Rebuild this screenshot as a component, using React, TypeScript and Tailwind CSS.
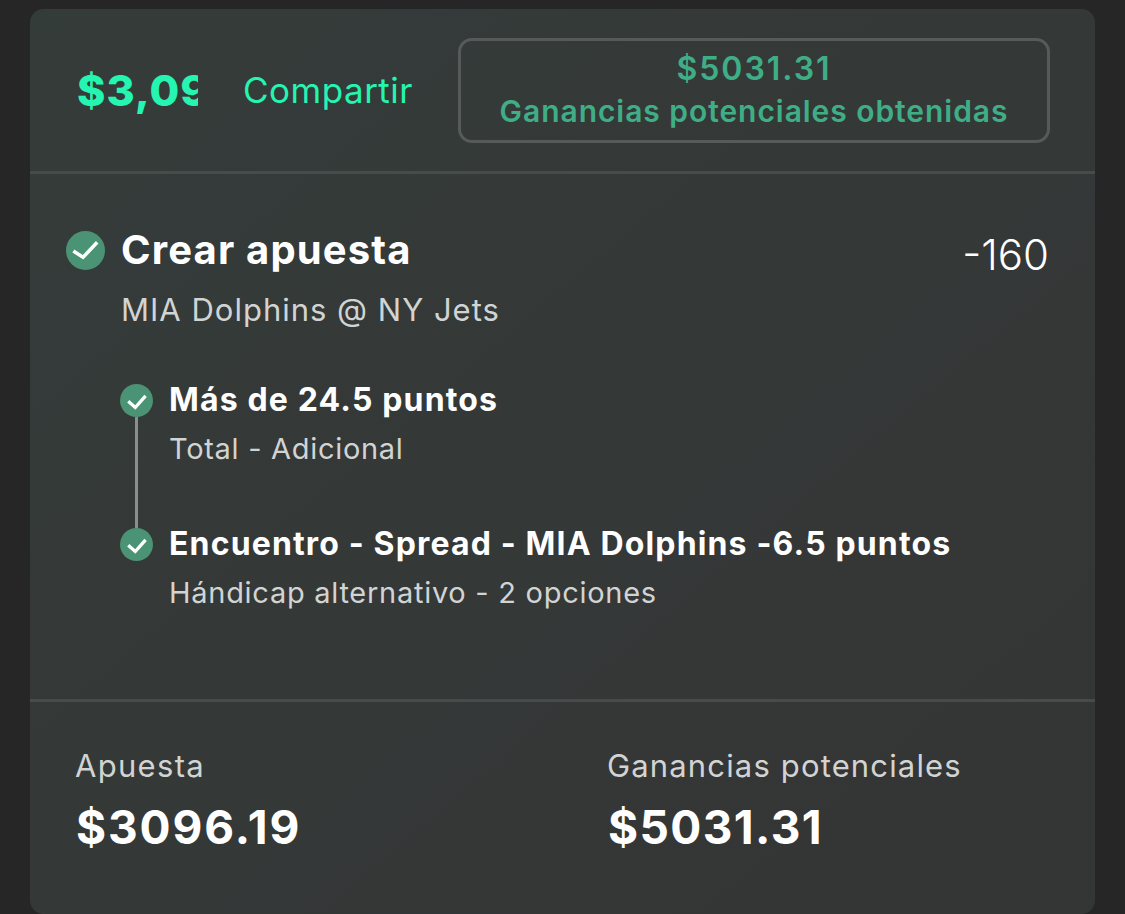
function Check({ size, d, w }: { size: number; d: string; w: number }) {
  return (
    <svg width={size} height={size} viewBox="0 0 40 40" className="shrink-0 block">
      <circle cx="20" cy="20" r="20" fill="#4a9374" />
      <path d={d} fill="none" stroke="#ffffff" strokeWidth={w} />
    </svg>
  );
}

const big = "M7.5 20.5 L17.5 27 L32 11.5";
const small = "M10 21 L18.5 28.5 L31 14.5";

export default function App() {
  return (
    <div className="h-[914px] overflow-hidden bg-[#262626] pt-[9px] pl-[30px] pr-[30px] font-['Inter',sans-serif]">
      <div className="h-[905px] w-[1065px] rounded-[14px] bg-gradient-to-br from-[#343c3a] to-[#343535] flex flex-col">
        <div className="h-[165px] shrink-0 flex items-center pl-[47px] pr-[45px] border-b-[3px] border-[#474c4b]">
          <div className="w-[121px] overflow-hidden whitespace-nowrap text-[43px] leading-[48px] font-extrabold tracking-[1px] text-[#25f5b0]">$3,09</div>
          <div className="ml-[45px] text-[35px] leading-[40px] tracking-[0.5px] text-[#25f5b0] whitespace-nowrap">Compartir</div>
          <div className="ml-auto w-[592px] h-[105px] rounded-[14px] border-[3px] border-[#565b5a] flex flex-col items-center justify-center text-[#3fae86] font-semibold leading-[43px]">
            <div className="text-[32px] tracking-[2px]">$5031.31</div>
            <div className="text-[30px] tracking-[0.95px]">Ganancias potenciales obtenidas</div>
          </div>
        </div>
        <div className="h-[528px] shrink-0 pl-[36px] pr-[46px] pt-[55px] border-b-[3px] border-[#474c4b]">
          <div className="flex items-start">
            <div className="pt-[2px]"><Check size={39} d={big} w={3.6} /></div>
            <div className="ml-[16px] flex-1">
              <div className="text-[40px] leading-[42px] font-bold tracking-[1.15px] text-white">Crear apuesta</div>
              <div className="mt-[21px] text-[31px] leading-[36px] text-[#d2d4d3] tracking-[1px]">MIA Dolphins @ NY Jets</div>
            </div>
            <div className="text-[42px] leading-[46px] font-light text-white pt-[3px]">-160</div>
          </div>
          <div className="ml-[54px] mt-[56px] flex">
            <div className="flex flex-col items-center w-[33px] shrink-0">
              <Check size={33} d={small} w={4} />
              <div className="w-[3px] h-[111px] bg-[#8b8e8d]" />
              <Check size={33} d={small} w={4} />
            </div>
            <div className="ml-[16px] -mt-[2px] flex flex-col">
              <div className="text-[32px] leading-[36px] font-bold text-white tracking-[1.15px]">Más de 24.5 puntos</div>
              <div className="mt-[13px] text-[29px] leading-[36px] text-[#d2d4d3] tracking-[0.7px]">Total - Adicional</div>
              <div className="mt-[59px] text-[32px] leading-[36px] font-bold text-white tracking-[1.15px] whitespace-nowrap">Encuentro - Spread - MIA Dolphins -6.5 puntos</div>
              <div className="mt-[13px] text-[29px] leading-[36px] text-[#d2d4d3] tracking-[0.72px] whitespace-nowrap">Hándicap alternativo - 2 opciones</div>
            </div>
          </div>
        </div>
        <div className="flex-1 flex pl-[46px] pt-[44px]">
          <div className="w-[532px]">
            <div className="-ml-[1px] text-[31px] leading-[40px] tracking-[1.3px] text-[#d2d4d3]">Apuesta</div>
            <div className="mt-[14px] text-[46px] leading-[54px] font-bold tracking-[1.9px] text-white">$3096.19</div>
          </div>
          <div>
            <div className="-ml-[1px] text-[31px] leading-[40px] tracking-[1.15px] text-[#d2d4d3]">Ganancias potenciales</div>
            <div className="mt-[14px] text-[46px] leading-[54px] font-bold tracking-[1.4px] text-white">$5031.31</div>
          </div>
        </div>
      </div>
    </div>
  );
}
